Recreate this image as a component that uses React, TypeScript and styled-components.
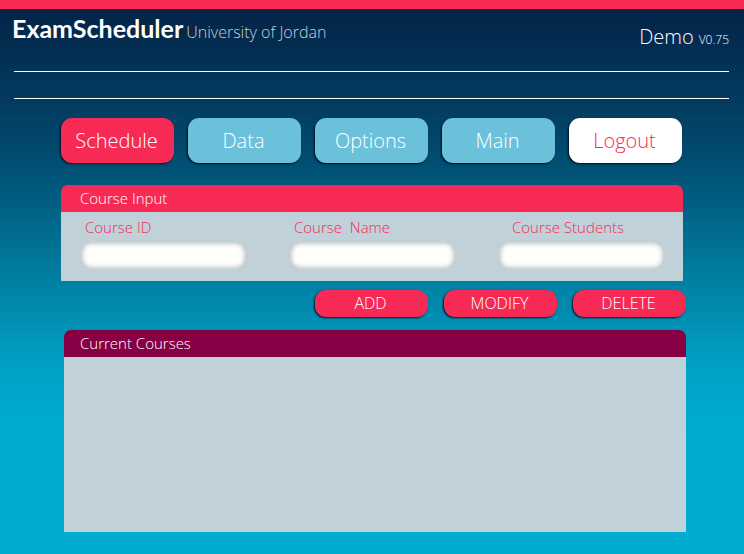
import React from 'react';
import styled, { createGlobalStyle } from 'styled-components';

const GlobalStyle = createGlobalStyle`
  *, *::before, *::after { box-sizing: border-box; }
  html { min-height: 100%; background: #00add1; }
  body { margin: 0; }
  body, button, input {
    font-family: "Open Sans", "Noto Sans", sans-serif;
    font-weight: 300;
  }
`;

const Page = styled.div`
  min-height: 100vh;
  border-top: 9px solid #f62a55;
  background: linear-gradient(#032448 0, #033c60 98px, #005377 166px, #0082a4 276px, #00a3c7 366px, #00add1 426px);
`;

const Header = styled.header`
  display: flex;
  justify-content: space-between;
  height: 62px;
  padding: 3px 15px 0 12px;
  color: #fff;
`;

const Brand = styled.div`
  display: flex;
  align-items: baseline;
  gap: 3px;
  height: 32px;
  line-height: 32px;
`;

const Logo = styled.h1`
  margin: 0;
  font-family: Lato, sans-serif;
  font-size: 25px;
  font-weight: 700;
`;

const School = styled.span`
  font-size: 16px;
  color: #c3d0da;
`;

const Release = styled.div`
  display: flex;
  align-items: baseline;
  gap: 5px;
  padding-top: 9px;
  line-height: 32px;
  font-size: 20px;
`;

const Version = styled.span`
  font-size: 12px;
`;

const Strip = styled.div`
  height: 28px;
  margin: 0 15px 0 14px;
  border: solid #fff;
  border-width: 1px 0;
`;

const Nav = styled.nav`
  display: flex;
  gap: 14px;
  padding: 19px 62px 0 61px;
`;

const tones = {
  active: { background: '#f62a55', color: '#fff' },
  normal: { background: '#6bc0da', color: '#fff' },
  light: { background: '#fff', color: '#f62a55' },
};

const NavButton = styled.button<{ $tone: keyof typeof tones }>`
  flex: 1 1 0;
  min-width: 0;
  height: 45px;
  padding: 0 2px 0 0;
  border: 0;
  border-radius: 11px;
  background: ${({ $tone }) => tones[$tone].background};
  color: ${({ $tone }) => tones[$tone].color};
  box-shadow: -1px 1px 2px rgba(0, 8, 24, 0.9);
  font-size: 20px;
  line-height: 44px;
  cursor: pointer;
`;

const InputPanel = styled.section`
  margin: 22px 61px 0;
`;

const CoursesPanel = styled.section`
  margin: 13px 58px 0 64px;
`;

const PanelTitle = styled.h2<{ $color: string; $inset: number }>`
  height: 27px;
  margin: 0;
  padding-left: ${({ $inset }) => $inset}px;
  border-radius: 7px 7px 0 0;
  background: ${({ $color }) => $color};
  color: #fff;
  font-size: 15px;
  font-weight: 300;
  line-height: 26px;
`;

const Fields = styled.form`
  display: grid;
  grid-template-columns: repeat(3, 1fr);
  gap: 44px;
  height: 69px;
  padding: 5px 19px 0 20px;
  background: #c1d1da;
`;

const Field = styled.label<{ $inset: number }>`
  display: flex;
  flex-direction: column;
  gap: 5px;
  min-width: 0;
  color: #f62a55;
  font-size: 15px;
  line-height: 20px;
  white-space: pre;

  span { padding-left: ${({ $inset }) => $inset}px; }
`;

const TextInput = styled.input`
  width: 100%;
  height: 27px;
  padding: 0 10px;
  border: 0;
  border-radius: 9px;
  background: #fff;
  box-shadow: inset 0 0 6px rgba(0, 0, 0, 0.4);
  font-size: 15px;
`;

const Actions = styled.div`
  display: flex;
  justify-content: flex-end;
  gap: 16px;
  margin: 9px 58px 0 0;
`;

const ActionButton = styled.button`
  width: 113px;
  height: 27px;
  padding: 0 2px 0 0;
  border: 0;
  border-radius: 11px;
  background: #f62a55;
  color: #fff;
  box-shadow: -1px 1px 2px rgba(0, 8, 24, 0.9);
  font-size: 16px;
  line-height: 27px;
  cursor: pointer;
`;

const CourseList = styled.div`
  min-height: 175px;
  background: #c1d1da;
`;

const menu: { label: string; tone: keyof typeof tones }[] = [
  { label: 'Schedule', tone: 'active' },
  { label: 'Data', tone: 'normal' },
  { label: 'Options', tone: 'normal' },
  { label: 'Main', tone: 'normal' },
  { label: 'Logout', tone: 'light' },
];

const fields = [
  { name: 'id', label: 'Course ID', inset: 4 },
  { name: 'name', label: 'Course  Name', inset: 4 },
  { name: 'students', label: 'Course Students', inset: 13 },
];

export default function App() {
  return (
    <>
      <GlobalStyle />
      <Page>
        <Header>
          <Brand>
            <Logo>ExamScheduler</Logo>
            <School>University of Jordan</School>
          </Brand>
          <Release>
            Demo <Version>V0.75</Version>
          </Release>
        </Header>
        <Strip />
        <Nav>
          {menu.map(({ label, tone }) => (
            <NavButton key={label} type="button" $tone={tone}>{label}</NavButton>
          ))}
        </Nav>
        <InputPanel>
          <PanelTitle $color="#f62a55" $inset={19}>Course Input</PanelTitle>
          <Fields>
            {fields.map(({ name, label, inset }) => (
              <Field key={name} htmlFor={name} $inset={inset}>
                <span>{label}</span>
                <TextInput id={name} name={name} type="text" />
              </Field>
            ))}
          </Fields>
        </InputPanel>
        <Actions>
          <ActionButton type="button">ADD</ActionButton>
          <ActionButton type="button">MODIFY</ActionButton>
          <ActionButton type="button">DELETE</ActionButton>
        </Actions>
        <CoursesPanel>
          <PanelTitle $color="#870045" $inset={16}>Current Courses</PanelTitle>
          <CourseList />
        </CoursesPanel>
      </Page>
    </>
  );
}
